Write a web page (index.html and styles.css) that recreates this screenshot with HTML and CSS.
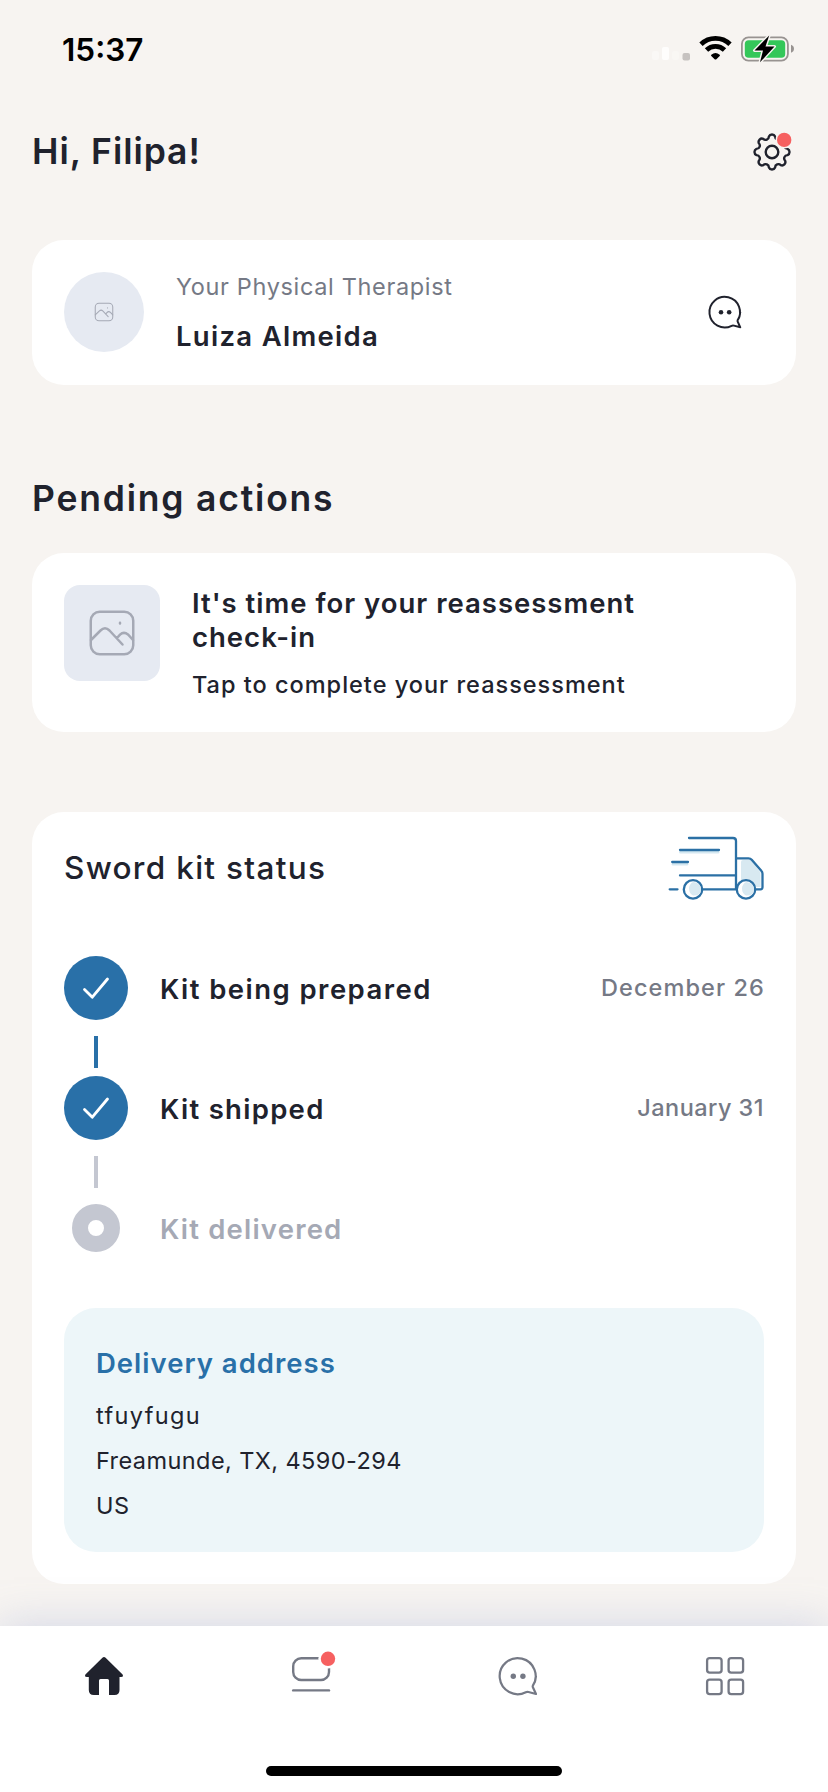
FILE: index.html
```html
<!DOCTYPE html>
<html lang="en">
<head>
<meta charset="utf-8">
<title>Home</title>
<link rel="stylesheet" href="styles.css">
</head>
<body>
<div class="screen">
  <div class="status-bar">
    <span class="clock">15:37</span>
    <svg class="status-icons" width="144" height="32" viewBox="0 0 144 32">
      <g fill="#fff">
        <rect x="2" y="17" width="7" height="9" rx="2" opacity=".35"/>
        <rect x="12" y="13" width="7" height="13" rx="2" opacity=".8"/>
        <rect x="22" y="17" width="7" height="9" rx="2" opacity=".25"/>
      </g>
      <rect x="32.500" y="19" width="7.500" height="7.500" rx="2" fill="#c6c2c0"/>
      <g fill="none" stroke="#000" stroke-width="4.800">
        <path d="M51 10.200a21 21 0 0 1 29 0"/>
        <path d="M56.500 16a13 13 0 0 1 18 0"/>
      </g>
      <path d="M61.300 20.700a6.500 6.500 0 0 1 8.400 0q.6.500 0 1.200l-3.300 3.300q-.9.800-1.800 0l-3.300-3.300q-.6-.7 0-1.200z"/>
      <rect x="91.900" y="3.400" width="46" height="23.200" rx="6.500" fill="none" stroke="#989391" stroke-width="1.800"/>
      <path d="M141 10.800q3 1.200 3 4t-3 4z" fill="#989391"/>
      <rect x="94.800" y="6.300" width="40.400" height="17.400" rx="3.800" fill="#34c759"/>
      <path d="M119.200 1.500 104.500 16.500h8.500l-3 11.800 14.500-15.700h-9z" fill="#000" stroke="#f7f4f1" stroke-width="3" stroke-linejoin="round" paint-order="stroke"/>
    </svg>
  </div>

  <header class="header">
    <h1 class="heading greeting">Hi, Filipa!</h1>
    <svg width="48" height="48" viewBox="-24 -24 48 48">
      <g fill="none" stroke="#20222d" stroke-width="2.400">
        <circle r="6.300"/>
        <path stroke-linejoin="round" d="M15.500-3.080A3.350 3.350 0 0 1 15.500 3.080A3.350 3.350 0 0 0 13.140 8.780A3.350 3.350 0 0 1 8.780 13.140A3.350 3.350 0 0 0 3.080 15.500A3.350 3.350 0 0 1-3.080 15.500A3.350 3.350 0 0 0-8.780 13.140A3.350 3.350 0 0 1-13.140 8.780A3.350 3.350 0 0 0-15.500 3.080A3.350 3.350 0 0 1-15.500-3.080A3.350 3.350 0 0 0-13.140-8.780A3.350 3.350 0 0 1-8.780-13.140A3.350 3.350 0 0 0-3.080-15.500A3.350 3.350 0 0 1 3.080-15.500A3.350 3.350 0 0 0 8.780-13.140A3.350 3.350 0 0 1 13.140-8.780A3.350 3.350 0 0 0 15.500-3.080Z"/>
      </g>
      <circle cx="12.200" cy="-12.100" r="8.600" fill="#f7f4f1"/>
      <circle cx="12.200" cy="-12.100" r="7.200" fill="#f66060"/>
    </svg>
  </header>

  <section class="card therapist">
    <div class="avatar">
      <svg width="20" height="20" viewBox="0 0 48 48" fill="none" stroke="#a5a9b5" stroke-width="2.500" stroke-linecap="round"><rect x="3" y="3" width="42" height="42" rx="9"/><path d="M3 31 13 21.500q4-4 8 0L34 35M28 29l3-3.500q4-4.500 8.500-.5l5.500 6M32.500 14v.5"/></svg>
    </div>
    <div class="therapist-text">
      <div class="role">Your Physical Therapist</div>
      <div class="label name">Luiza Almeida</div>
    </div>
    <svg class="chat" width="34" height="34" viewBox="0 0 40 40" fill="none" stroke="#20222d" stroke-width="2.300"><path stroke-linejoin="round" d="M34.600 30.200A18 18 0 1 0 27.800 36.200Q29 35.600 30.500 36L38 38 35 31.500Q34.500 30.800 34.800 29.800A18 18 0 0 0 38 20"/><circle cx="15.300" cy="20.200" r="2.700" fill="#20222d" stroke="none"/><circle cx="24.900" cy="20.200" r="2.700" fill="#20222d" stroke="none"/></svg>
  </section>

  <h2 class="heading pending">Pending actions</h2>

  <section class="card action">
    <div class="thumb">
      <svg width="48" height="48" viewBox="0 0 48 48" fill="none" stroke="#a5a9b5" stroke-width="2.500" stroke-linecap="round"><rect x="2.750" y="2.750" width="42.500" height="42.500" rx="9"/><path d="M3 31 12.500 21.500q4.500-4.500 9 0L34.500 35.500M29 29l3-3.300q3.800-3.500 8-.2l5 5.500M32 13.800v.6"/></svg>
    </div>
    <div class="action-text">
      <div class="label action-title">It's time for your reassessment<br>check-in</div>
      <div class="action-note">Tap to complete your reassessment</div>
    </div>
  </section>

  <section class="card kit">
    <div class="kit-head">
      <h3 class="kit-title">Sword kit status</h3>
      <svg width="96" height="64" viewBox="0 0 96 64" fill="none" stroke-linecap="round" stroke-linejoin="round">
        <path d="M12.500 16H50M5 28h14" stroke="#d5e8f1" stroke-width="3"/>
        <path d="M73 26q0-2 2-2h8l9.500 12.500v14.500H73z" fill="#d8e9f1"/>
        <g stroke="#2b70a5" stroke-width="2.300">
          <path d="M21 2h44q3 0 3 3v48.300M12 14h39M4.200 26H20M12 39.400h56M34.500 53.300H68M1.700 53.300H9.500M68 22.300h12.500q2 0 3.200 1.400l9.600 11q1.200 1.300 1.200 3v13.600q0 2-2 2H88"/>
          <circle cx="25" cy="53.400" r="9.200" fill="#fff"/>
          <circle cx="78" cy="53.400" r="9.200" fill="#fff"/>
        </g>
        <path d="M25 46q8 1 8 7.400t-8 6.100q-4-2-4-7 0-4 4-6.500M78 46q8 1 8 7.400t-8 6.100q-4-2-4-7 0-4 4-6.500" fill="#d8e9f1"/>
      </svg>
    </div>

    <ol class="steps">
      <li class="step">
        <span class="marker done"><svg width="30" height="26" viewBox="0 0 30 26" fill="none" stroke="#fff" stroke-width="2.800" stroke-linecap="round" stroke-linejoin="round"><path d="M3.500 14.500 11.300 22.200 26.500 4"/></svg></span>
        <span class="label prepared">Kit being prepared</span><span class="date december">December 26</span>
      </li>
      <li class="connector connector-done"></li>
      <li class="step">
        <span class="marker done"><svg width="30" height="26" viewBox="0 0 30 26" fill="none" stroke="#fff" stroke-width="2.800" stroke-linecap="round" stroke-linejoin="round"><path d="M3.500 14.500 11.300 22.200 26.500 4"/></svg></span>
        <span class="label shipped">Kit shipped</span><span class="date january">January 31</span>
      </li>
      <li class="connector"></li>
      <li class="step">
        <span class="marker"><span class="ring"></span></span>
        <span class="label delivered">Kit delivered</span>
      </li>
    </ol>

    <div class="address">
      <div class="label address-title">Delivery address</div>
      <div class="line street">tfuyfugu</div>
      <div class="line">Freamunde, TX, 4590-294</div>
      <div class="line">US</div>
    </div>
  </section>

  <nav class="tabs">
    <div class="tab-row">
      <a class="tab"><svg width="40" height="40" viewBox="0 0 40 40" fill="#20222d"><path d="M18.400 1.700q1.600-1.600 3.200 0L38.600 18.500q1.200 2.500-1.500 2.500H35.500v13q0 5-5 5H25V24.500q0-1.500-1.500-1.500h-7q-1.500 0-1.500 1.500V39H9.800q-5 0-5-5V21H2.900q-2.700 0-1.500-2.500z"/></svg></a>
      <a class="tab"><svg width="48" height="48" viewBox="0 0 48 48" fill="none" stroke="#757985" stroke-width="2.400" stroke-linecap="round"><rect x="6.200" y="6.200" width="35.800" height="21.800" rx="8"/><path d="M6.200 38.400h35.800"/><circle cx="41" cy="6.800" r="9.700" fill="#fff" stroke="none"/><circle cx="41" cy="6.800" r="7.200" fill="#f66060" stroke="none"/></svg></a>
      <a class="tab"><svg width="40" height="40" viewBox="0 0 40 40" fill="none" stroke="#757985" stroke-width="2.200"><path stroke-linejoin="round" d="M34.600 30.200A18 18 0 1 0 27.800 36.200Q29 35.600 30.500 36L38 38 35 31.500Q34.500 30.800 34.800 29.800A18 18 0 0 0 38 20"/><circle cx="15.300" cy="20.200" r="2.700" fill="#757985" stroke="none"/><circle cx="24.900" cy="20.200" r="2.700" fill="#757985" stroke="none"/></svg></a>
      <a class="tab"><svg width="40" height="40" viewBox="0 0 40 40" fill="none" stroke="#757985" stroke-width="2.300"><rect x="2.100" y="2.100" width="14.500" height="14.500" rx="2.600"/><rect x="23.600" y="2.100" width="14.500" height="14.500" rx="2.600"/><rect x="2.100" y="23.600" width="14.500" height="14.500" rx="2.600"/><rect x="23.600" y="23.600" width="14.500" height="14.500" rx="2.600"/></svg></a>
    </div>
    <div class="home-indicator"></div>
  </nav>
</div>
</body>
</html>
```
FILE: styles.css
```css
* { box-sizing: border-box; margin: 0; padding: 0; }

body {
  background: #f7f4f1;
  color: #20222d;
  font-family: Inter, "Open Sans", sans-serif;
}

svg { display: block; overflow: visible; }

.screen {
  width: 828px;
  height: 1792px;
  overflow: hidden;
  display: flex;
  flex-direction: column;
  background: #f7f4f1;
}

.screen > * { flex-shrink: 0; }

.status-bar {
  height: 100px;
  padding: 0 34px 0 62px;
  display: flex;
  align-items: center;
  justify-content: space-between;
}

.clock {
  color: #000;
  font-size: 31.500px;
  font-weight: 600;
  line-height: 40px;
}

.header {
  height: 104px;
  padding: 0 32px;
  display: flex;
  align-items: center;
  justify-content: space-between;
}

.heading {
  font-size: 35.500px;
  font-weight: 600;
  line-height: 44px;
  white-space: nowrap;
}

.greeting { letter-spacing: .950px; }

.card {
  margin: 0 32px;
  background: #fff;
  border-radius: 32px;
}

.therapist {
  height: 145px;
  margin-top: 36px;
  padding: 32px 54px 0 32px;
  display: flex;
  align-items: flex-start;
}

.avatar {
  width: 80px;
  height: 80px;
  border-radius: 50%;
  background: #e6eaf2;
  display: flex;
  align-items: center;
  justify-content: center;
}

.therapist-text { margin: -2px 0 0 32px; flex: 1; }

.role {
  color: #757985;
  font-size: 23.500px;
  font-weight: 400;
  letter-spacing: .650px;
  line-height: 34px;
  white-space: nowrap;
}

.label {
  font-size: 27.500px;
  font-weight: 600;
  line-height: 34px;
  white-space: nowrap;
}

.name { margin-top: 15px; letter-spacing: 1.300px; }

.chat { margin-top: 23px; }

.pending { margin: 92px 32px 0; letter-spacing: 1.800px; }

.action {
  height: 179px;
  margin-top: 32px;
  padding: 32px;
  display: flex;
}

.thumb {
  width: 96px;
  height: 96px;
  border-radius: 16px;
  background: #e6eaf2;
  display: flex;
  align-items: center;
  justify-content: center;
}

.action-text { margin: 1px 0 0 32px; }

.action-title { letter-spacing: 1px; }

.action-note {
  margin-top: 14px;
  font-size: 23.500px;
  font-weight: 450;
  letter-spacing: 1px;
  line-height: 34px;
  white-space: nowrap;
}

.kit {
  height: 772px;
  margin-top: 80px;
  padding: 24px 32px 32px;
}

.kit-head {
  height: 64px;
  display: flex;
  align-items: center;
  justify-content: space-between;
}

.kit-title {
  font-size: 31.500px;
  font-weight: 450;
  letter-spacing: 1.300px;
  line-height: 40px;
}

.steps { margin-top: 56px; list-style: none; }

.step {
  height: 64px;
  display: flex;
  align-items: center;
}

.step .label { padding-top: 2px; }

.marker {
  width: 64px;
  height: 64px;
  margin-right: 32px;
  border-radius: 50%;
  display: flex;
  align-items: center;
  justify-content: center;
}

.done { background: #2970a8; }

.ring {
  width: 48px;
  height: 48px;
  border: 16px solid #c4c7d1;
  border-radius: 50%;
}

.connector {
  width: 4px;
  height: 32px;
  margin: 16px 0 8px 30px;
  background: #c4c7d1;
}

.connector-done { background: #2970a8; }

.prepared { letter-spacing: 1.450px; }
.shipped { letter-spacing: 1.300px; }
.delivered { color: #a5a9b5; letter-spacing: 1.200px; }

.date {
  margin-left: auto;
  color: #757985;
  font-size: 23.500px;
  font-weight: 450;
  line-height: 34px;
}

.december { margin-right: -1px; letter-spacing: 1.100px; }
.january { letter-spacing: .450px; }

.address {
  height: 244px;
  margin-top: 48px;
  padding: 38px 32px 0;
  border-radius: 32px;
  background: #edf6f9;
}

.address-title {
  margin-bottom: 13px;
  color: #2970a8;
  letter-spacing: 1px;
}

.line {
  font-size: 23.500px;
  font-weight: 400;
  letter-spacing: .420px;
  line-height: 45px;
}

.street { letter-spacing: 1.350px; }

.tabs {
  height: 166px;
  margin-top: 42px;
  background: #fff;
  box-shadow: 0 0 40px rgba(145, 160, 210, .36);
}

.tab-row { display: flex; height: 100px; }

.tab {
  flex: 1;
  display: flex;
  align-items: center;
  justify-content: center;
}

.home-indicator {
  width: 296px;
  height: 10px;
  margin: 40px auto 0;
  border-radius: 5px;
  background: #000;
}
```
